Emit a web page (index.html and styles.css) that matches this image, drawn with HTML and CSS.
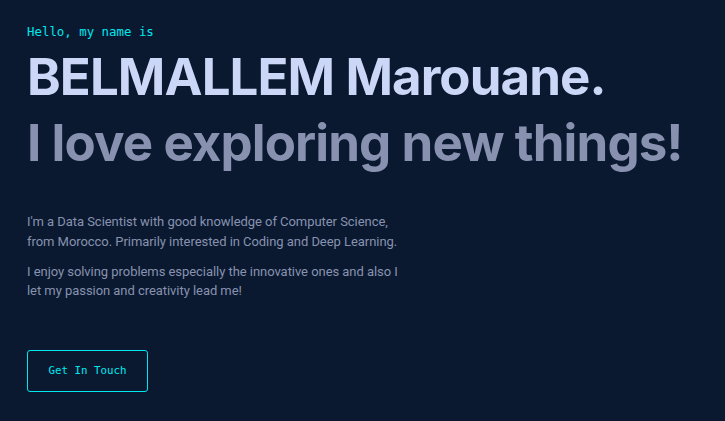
FILE: index.html
```html
<!DOCTYPE html>
<html lang="en">
<head>
<meta charset="utf-8">
<title>BELMALLEM Marouane</title>
<link rel="stylesheet" href="styles.css">
</head>
<body>
<section class="hero">
  <h1 class="hello">Hello, my name is</h1>
  <h2 class="big name">BELMALLEM Marouane.</h2>
  <h3 class="big tagline">I love exploring new things!</h3>
  <div class="about">
    <p>I'm a Data Scientist with good knowledge of Computer Science, from Morocco. Primarily interested in Coding and Deep Learning.</p>
    <p>I enjoy solving problems especially the innovative ones and also I let my passion and creativity lead me!</p>
  </div>
  <a class="cta" href="#contact">Get In Touch</a>
</section>
</body>
</html>
```
FILE: styles.css
```css
html, body {
  margin: 0;
  padding: 0;
  background: #0a192f;
}
body {
  font-family: "Roboto", "Liberation Sans", sans-serif;
  color: #8892b0;
}
.hero {
  padding: 23px 0 0 27px;
  display: flex;
  flex-direction: column;
  align-items: flex-start;
}
.hello {
  margin: 0;
  font-family: "DejaVu Sans Mono", monospace;
  font-size: 12.4px;
  font-weight: 400;
  line-height: 18px;
  color: #00e8ef;
}
.big {
  margin: 0;
  font-family: "Inter", "Open Sans", sans-serif;
  font-weight: 700;
  font-size: 51px;
  letter-spacing: -0.9px;
}
.name {
  color: #ccd6f6;
  line-height: 64px;
  margin-top: 4px;
}
.tagline {
  color: #8892b0;
  line-height: 64px;
  margin-top: 2px;
}
.about {
  margin-top: 37px;
  width: 385px;
}
.about p {
  margin: 0 0 10.5px;
  font-size: 13px;
  line-height: 19.5px;
  letter-spacing: -0.05px;
}
.about p:last-child {
  margin-bottom: 0;
}
.cta {
  margin-top: 49px;
  width: 119px;
  height: 40px;
  display: flex;
  align-items: center;
  justify-content: center;
  border: 1px solid #00e8ef;
  border-radius: 3px;
  color: #00e8ef;
  text-decoration: none;
  font-family: "DejaVu Sans Mono", monospace;
  font-size: 10.8px;
}
```
